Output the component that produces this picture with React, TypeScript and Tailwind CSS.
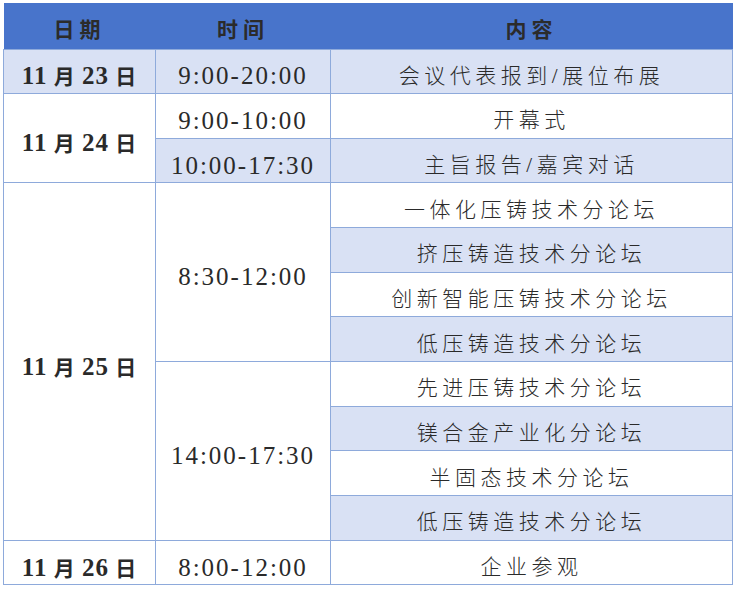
import React from "react";

type Row = {
  date?: { day: string; span: number };
  time?: { text: string; span: number };
  content: string;
};

const rows: Row[] = [
  { date: { day: "23", span: 1 }, time: { text: "9:00-20:00", span: 1 }, content: "会议代表报到/展位布展" },
  { date: { day: "24", span: 2 }, time: { text: "9:00-10:00", span: 1 }, content: "开幕式" },
  { time: { text: "10:00-17:30", span: 1 }, content: "主旨报告/嘉宾对话" },
  { date: { day: "25", span: 8 }, time: { text: "8:30-12:00", span: 4 }, content: "一体化压铸技术分论坛" },
  { content: "挤压铸造技术分论坛" },
  { content: "创新智能压铸技术分论坛" },
  { content: "低压铸造技术分论坛" },
  { time: { text: "14:00-17:30", span: 4 }, content: "先进压铸技术分论坛" },
  { content: "镁合金产业化分论坛" },
  { content: "半固态技术分论坛" },
  { content: "低压铸造技术分论坛" },
  { date: { day: "26", span: 1 }, time: { text: "8:00-12:00", span: 1 }, content: "企业参观" },
];

const font = { fontFamily: '"Liberation Serif", "Noto Sans CJK SC", serif' };

const heads = ["日期", "时间", "内容"];

function DateText({ day }: { day: string }) {
  return (
    <>
      <span className="text-[25px]">11</span> 月 <span className="text-[25px]">{day}</span> 日
    </>
  );
}

export default function App() {
  return (
    <div className="w-[735px] h-[591px] bg-white pt-[3px] pl-[3px]" style={font}>
      <table className="w-[729px] table-fixed border-collapse text-[#2a2a2a] text-[21px]">
        <colgroup>
          <col className="w-[152px]" />
          <col className="w-[175px]" />
          <col className="w-[402px]" />
        </colgroup>
        <thead>
          <tr className="h-[46px] bg-[#4874cb]">
            {heads.map((h) => (
              <th key={h} className="p-0 pt-[9px] align-middle leading-none text-[#2b2b2b] font-bold tracking-[5px]">
                {h}
              </th>
            ))}
          </tr>
        </thead>
        <tbody>
          {rows.map((r, i) => {
            const fill = i % 2 === 0 ? "bg-[#d9e1f4]" : "bg-white";
            return (
              <tr key={i} className="h-[44.67px]">
                {r.date && (
                  <td
                    rowSpan={r.date.span}
                    className={`${fill} border border-[#8eaadb] text-center font-bold tracking-[1px] pt-[9px] leading-none whitespace-pre`}
                  >
                    <DateText day={r.date.day} />
                  </td>
                )}
                {r.time && (
                  <td
                    rowSpan={r.time.span}
                    className={`${fill} border border-[#8eaadb] text-center text-[25px] tracking-[2px] pt-[9px] leading-none`}
                  >
                    {r.time.text}
                  </td>
                )}
                <td className={`${fill} border border-[#8eaadb] text-center font-light tracking-[4.5px] pt-[10px] leading-none`}>
                  {r.content}
                </td>
              </tr>
            );
          })}
        </tbody>
      </table>
    </div>
  );
}
